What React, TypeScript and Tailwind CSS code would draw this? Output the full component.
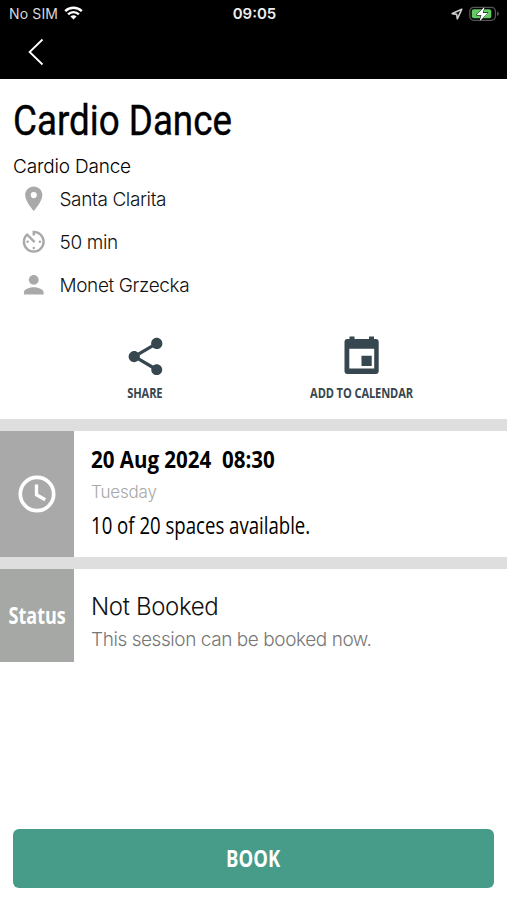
import * as React from 'react';
import { ReactNode } from 'react';
import { MdAvTimer, MdPerson, MdPlace, MdShare } from 'react-icons/md';

function StatusBar() {
	return (
		<div className="flex h-7 items-center justify-between pl-[9px] pr-[7px] font-['Inter',sans-serif] text-white">
			<div className="flex w-[200px] items-center gap-[6px]">
				<span className="text-[14px] leading-none tracking-[0.01em] text-[#d8d8d8]">No SIM</span>
				<svg className="-mt-[2px]" width="19" height="14" viewBox="0 0 19 14" fill="none" stroke="#fff" strokeWidth="2.4">
					<path d="M1.2 5.2a11.8 11.8 0 0 1 16.6 0" />
					<path d="M4.1 8.4a7.6 7.6 0 0 1 10.8 0" />
					<path d="M9.5 13.6 6.4 10.5a4.4 4.4 0 0 1 6.2 0z" fill="#fff" stroke="none" />
				</svg>
			</div>
			<span className="-mt-px text-[15px] font-semibold leading-none text-[#eee]">09:05</span>
			<div className="flex w-[200px] items-center justify-end gap-[6px]">
				<svg width="12" height="12" viewBox="0 0 12 12" fill="none" stroke="#ccc" strokeWidth="1.6" strokeLinejoin="round">
					<path d="M10.8 1.2 1.2 5.6l4.5 0.8 0.6 4.4z" />
				</svg>
				<svg className="-mt-px" width="31" height="16" viewBox="0 0 31 16">
					<rect x="0.8" y="1.3" width="25.6" height="13" rx="4" fill="none" stroke="#555" strokeWidth="1.3" />
					<path d="M28 5.5v4.6c1.4-.5 2-1.3 2-2.3s-.6-1.8-2-2.3z" fill="#555" />
					<rect x="2.8" y="3.3" width="19.5" height="9" rx="2" fill="#62cb65" />
					<path d="M15.8 0.6 7.4 9h5l-2 6.4 8.600-8.5h-5.2z" fill="#fff" stroke="#000" strokeWidth="1" paintOrder="stroke" />
				</svg>
			</div>
		</div>
	);
}

function ClockIcon() {
	return (
		<svg width="38" height="38" viewBox="0 0 38 38" fill="none" stroke="currentColor">
			<circle cx="19" cy="19" r="16.7" strokeWidth="3.7" />
			<path d="M18.500 9.5v10.3l8.7 5" strokeWidth="3.3" />
		</svg>
	);
}

function CalendarIcon() {
	return (
		<svg width="45" height="45" viewBox="0 0 45 45" fill="currentColor">
			<path
				fillRule="evenodd"
				d="M10.5 2.6h5V5H30V2.6h5V5h1.8a2.9 2.9 0 0 1 2.9 2.9V37a2.9 2.9 0 0 1-2.9 2.9H8.4A2.9 2.9 0 0 1 5.5 37V7.9A2.9 2.9 0 0 1 8.4 5h2.1zM10.3 14.8v19.7h24.9V14.8zM22.5 21.8h10.2V32H22.5z"
			/>
		</svg>
	);
}

function InfoRow({ icon, children }: { icon: ReactNode; children: ReactNode }) {
	return (
		<div className="flex h-[43px] items-center gap-[11px] pl-[19px]">
			<span className="pb-[2px] text-[29.5px] text-[#a9a9a9]">{icon}</span>
			<span className="whitespace-nowrap pt-px text-[19px] font-light tracking-[-0.02em] text-[#111]">{children}</span>
		</div>
	);
}

function Action({ icon, label }: { icon: ReactNode; label: string }) {
	return (
		<div className="flex flex-1 flex-col items-center gap-[3px]">
			<span className="text-[45px]">{icon}</span>
			<span className="scale-x-[0.74] whitespace-nowrap text-[15px] font-bold leading-5 tracking-[-0.01em]">{label}</span>
		</div>
	);
}

export default function App() {
	return (
		<div className="flex h-[900px] w-[507px] flex-col overflow-hidden bg-white font-['Inter',sans-serif] text-black">
			<header className="h-[79px] shrink-0 bg-black">
				<StatusBar />
				<svg className="ml-[28px] mt-[10px]" width="16" height="28" viewBox="0 0 16 28" fill="none" stroke="#fff" strokeWidth="1.8">
					<path d="M14.5 1.5 1.6 14l12.9 12.5" />
				</svg>
			</header>

			<section className="h-[340px] shrink-0">
				<h1 className="ml-[13px] mt-[17px] h-[50px] w-max origin-left scale-x-[0.875] whitespace-nowrap font-['Roboto',sans-serif] text-[42px] leading-[50px] [-webkit-text-stroke:0.4px_#000]">
					Cardio Dance
				</h1>
				<p className="mb-[-1px] ml-[13px] mt-[9px] h-6 w-max text-[19px] font-[350] leading-6 tracking-[-0.01em]">Cardio Dance</p>
				<InfoRow icon={<MdPlace />}>Santa Clarita</InfoRow>
				<InfoRow icon={<MdAvTimer />}>50 min</InfoRow>
				<InfoRow icon={<MdPerson />}>Monet Grzecka</InfoRow>
				<div className="mt-[27px] flex px-[37px] font-['Open_Sans',sans-serif] text-[#37474f]">
					<Action icon={<MdShare />} label="SHARE" />
					<Action icon={<CalendarIcon />} label="ADD TO CALENDAR" />
				</div>
			</section>

			<div className="h-3 shrink-0 bg-[#dedede]" />

			<section className="flex h-[126px] shrink-0">
				<div className="flex w-[74px] items-center justify-center bg-[#a9a9a9] text-white">
					<ClockIcon />
				</div>
				<div className="flex flex-col items-start pl-[17px] pt-3">
					<span className="origin-left scale-x-[0.855] whitespace-pre font-['Open_Sans',sans-serif] text-[24px] font-bold leading-8">20 Aug 2024  08:30</span>
					<span className="mt-[5px] text-[17px] font-light leading-6 tracking-[-0.01em] text-[#a8a8a8]">Tuesday</span>
					<span className="mt-[5px] origin-left scale-x-[0.775] whitespace-nowrap font-['Open_Sans',sans-serif] text-[24px] leading-8">10 of 20 spaces available.</span>
				</div>
			</section>

			<div className="h-3 shrink-0 bg-[#dedede]" />

			<section className="flex h-[93px] shrink-0">
				<div className="flex w-[74px] items-center justify-center bg-[#a5a8a5] text-white">
					<span className="scale-x-[0.75] pb-[2px] font-['Open_Sans',sans-serif] text-[24px] font-bold">Status</span>
				</div>
				<div className="flex flex-col items-start pl-[17px] pt-[22px]">
					<span className="text-[24px] font-light leading-8 tracking-[-0.015em] text-[#111]">Not Booked</span>
					<span className="mt-[5px] whitespace-nowrap text-[19px] font-light leading-6 tracking-[-0.023em] text-[#777]">This session can be booked now.</span>
				</div>
			</section>

			<button className="mx-[13px] mb-3 mt-auto flex h-[59px] shrink-0 items-center justify-center rounded-[6px] bg-[#469c89] text-white">
				<span className="scale-x-[0.77] pb-[2px] font-['Open_Sans',sans-serif] text-[24px] font-bold">BOOK</span>
			</button>
		</div>
	);
}
